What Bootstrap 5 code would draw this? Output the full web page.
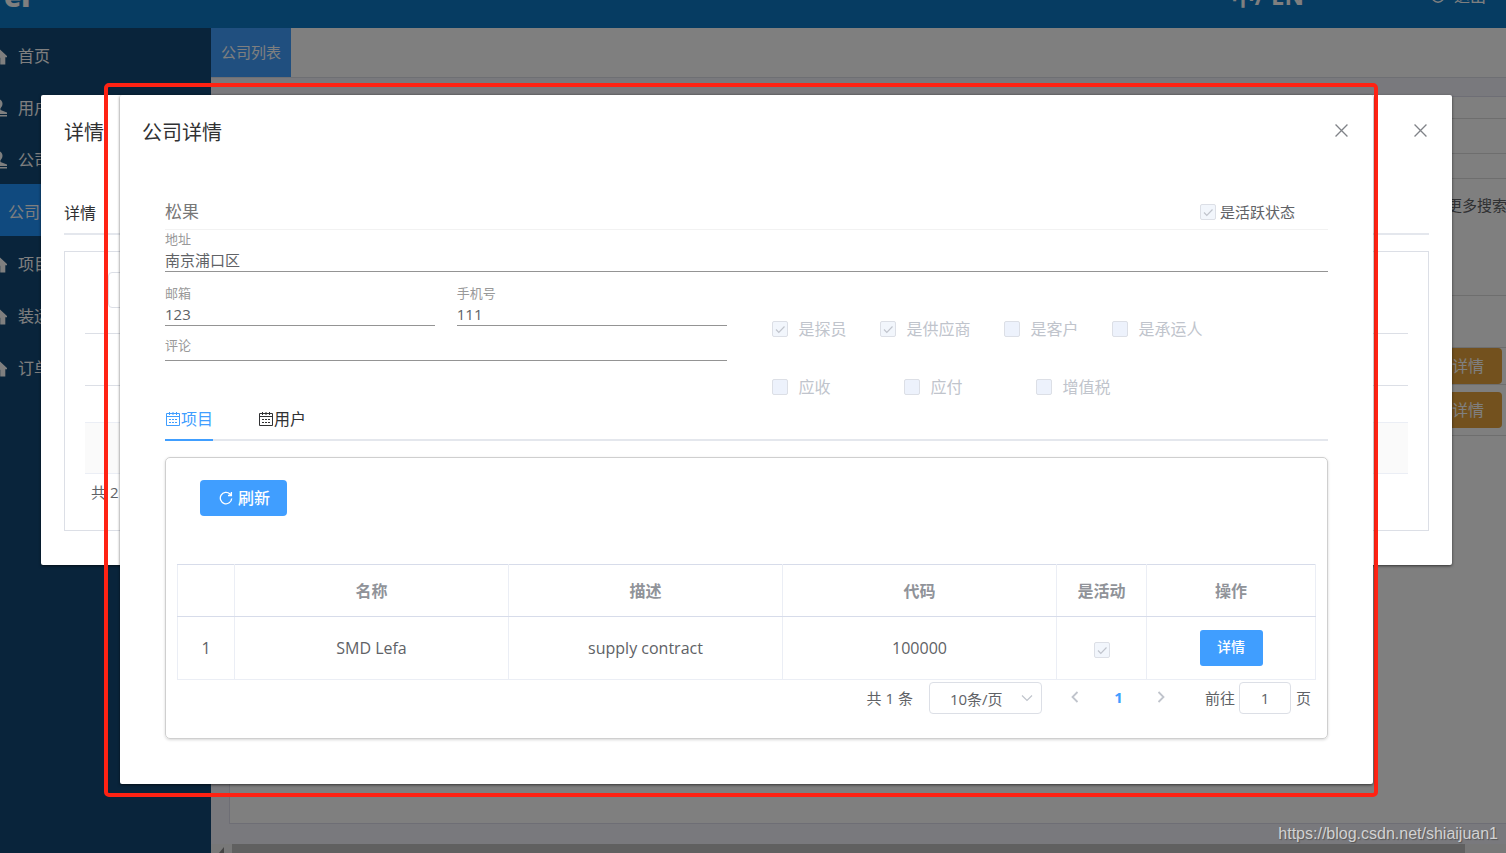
<!DOCTYPE html>
<html lang="zh-CN">
<head>
<meta charset="utf-8">
<meta name="viewport" content="width=device-width, initial-scale=1">
<title>公司详情</title>
<link href="https://cdn.jsdelivr.net/npm/bootstrap@5.3.0/dist/css/bootstrap.min.css" rel="stylesheet">
<style>
  body { font-family: "Open Sans", "Noto Sans CJK SC", sans-serif; font-size: 16px; color: #606266; }
  a { text-decoration: none; }
  .icon { display: block; flex: none; }

  /* page behind the dialogs */
  .topbar { height: 28px; background: #0c78c4; color: #fff; padding-bottom: 20px; line-height: 24px; }
  .topbar .brand-name { font-size: 28px; font-weight: 800; }
  .topbar .lang { font-size: 24px; font-weight: 700; }
  .topbar .logout { font-size: 16px; color: #fff; margin: 0 20px 0 126px; }
  .side { width: 211px; background: #124876; }
  .side a { height: 52px; color: #fff; padding: 3px 0 0 18px; position: relative; }
  .side a.on { background: #2094fe; padding-left: 8px; }
  .side .icon { position: absolute; left: -11px; }
  .workspace { background: #f2f2fa; }
  .page-tabs { height: 50px; background: #fff; border-bottom: 1px solid #dcdfe6; }
  .page-tabs a { width: 80px; background: #409eff; color: #fff; font-size: 15px; }
  .sheet { margin: 18px 0 20px 18px; background: #fff; border: 1px solid #dcdcea; border-right: 0; }
  .line { border-bottom: 1px solid #dcdcdc; }
  .more { font-size: 15px; color: #606266; width: 59px; white-space: nowrap; padding-top: 15px; }
  .btn-amber { width: 68px; height: 36px; background: #e6a23c; color: #fff; padding: 0; border-radius: 4px; margin-right: 4px; }
  .hscroll { height: 9px; background: #f1f1f1; padding: 0 41px 0 8px; }
  .hscroll .thumb { background: #c1c1c1; margin-left: 8px; }
  .shade { background: rgba(0, 0, 0, .5); }

  /* dialogs */
  .dlg { background: #fff; border-radius: 2px; box-shadow: 0 1px 3px rgba(0, 0, 0, .6); }
  .dlg-back { inset: 95px 54px auto 41px; padding: 26px 23px 34px; }
  .dlg-frame { inset: 83px 128px auto 104px; padding: 8px 1px 9px 12px; border: 4px solid #ff2213; border-radius: 5px; }
  .dlg-front { padding: 26px 45px 45px; }
  .dlg-head { height: 24px; }
  .dlg-front .dlg-head { margin: 0 -22px 50px -23px; }
  .dlg-head h2 { font-size: 20px; line-height: 24px; color: #303133; font-weight: 400; margin: 0; }
  .dlg-close { border: 0; background: none; padding: 0; height: 18px; color: #808388; margin-right: 2px; }

  .tab-line { border-bottom: 2px solid #e4e7ed; }
  .tab-line a { display: flex; align-items: center; color: #303133; }
  .tab-line a.on { color: #409eff; border-bottom: 2px solid #409eff; margin-bottom: -2px; }
  .tab-back { margin-top: 48px; height: 42px; }
  .tab-front { height: 42px; gap: 45px; }
  .panel-back { margin-top: 16px; padding: 20px 20px 26px; border: 1px solid #dcdfe6; }
  .panel-back .search { height: 36px; margin: 0 23px 25px; border-color: #dcdfe6; border-radius: 4px; }
  .grid-back { border-top: 1px solid #dcdfe6; }
  .grid-back div { border-bottom: 1px solid #dcdfe6; height: 52px; }
  .grid-back div.gap-row { height: 37px; border-color: #ebeef5; }
  .grid-back div.stripe { height: 51px; background: #fafafa; border-color: #ebeef5; }
  .count { font-size: 15px; line-height: 24px; padding: 6px 0 0 6px; }

  .name-row { height: 35px; border-bottom: 1px solid #f2f2f2; }
  .name-row input[type=text] { border: 0; padding: 0; font-size: 17px; color: #777; background: none; }
  .name-row label { font-size: 15px; margin-right: 33px; gap: 4px; color: #606266; }
  .field label { display: block; font-size: 13px; line-height: 18px; color: #999; }
  .field input { display: block; width: 100%; height: 24px; padding: 0; border: 0; border-bottom: 1px solid #949494; border-radius: 0; font-size: 15px; color: #606266; background: none; }
  .field.blank input { height: 7px; }
  .pair { margin: 12px 0 10px; gap: 22px; }
  .left-part { padding-right: 20px; }
  .flags { padding: 45px 0 0 25px; }
  .flags label { height: 24px; gap: 11px; color: #c0c4cc; }
  .flag-row { gap: 33px; margin-bottom: 34px; }
  .flag-row.wide { gap: 73px; margin-bottom: 0; }
  .tick { appearance: none; flex: none; width: 16px; height: 16px; margin: 0; border: 1px solid #dcdfe6; border-radius: 2px; background: #edf2fc; }
  .tick:checked { background: #f2f6fc url("data:image/svg+xml,%3Csvg xmlns='http://www.w3.org/2000/svg' viewBox='0 0 14 14'%3E%3Cpath d='M3 7.5l2.8 2.8L11.5 4.5' fill='none' stroke='%23c0c4cc' stroke-width='1.2'/%3E%3C/svg%3E") center/14px no-repeat; }

  .list-panel { margin-top: 16px; padding: 22px 11px 24px; border: 1px solid #cfcfcf; border-radius: 5px; box-shadow: 0 1px 3px rgba(0, 0, 0, .16); }
  .btn-blue { height: 36px; background: #409eff; color: #fff; border-radius: 4px; padding: 0 16px 0 18px; gap: 5px; font-weight: 500; }
  .btn-blue:hover { background: #66b1ff; color: #fff; }
  .btn-refresh { margin: 0 23px 48px; }
  .btn-detail { width: 63px; padding: 0 0 4px; font-size: 14px; border-radius: 3px; }
  .records { width: 100%; table-layout: fixed; border-collapse: collapse; text-align: center; border: 1px solid #ebeef5; border-top-color: #d7dcea; }
  .records th { height: 52px; color: #909399; font-weight: 700; border-right: 1px solid #ebeef5; border-bottom: 1px solid #d7dcea; }
  .records td { height: 63px; border-right: 1px solid #ebeef5; }
  .records .c-no { width: 57px; } .records .c-act { width: 90px; } .records .c-op { width: 169px; }
  .pager { font-size: 15px; margin: 2px 5px 0 0; line-height: 32px; }
  .pager select { width: 113px; height: 32px; margin: 0 16px; padding: 0 19px 3px 20px; border: 1px solid #dcdfe6; border-radius: 4px; color: #606266; font-size: 15px; appearance: none;
    background: url("data:image/svg+xml,%3Csvg xmlns='http://www.w3.org/2000/svg' viewBox='0 0 12 12'%3E%3Cpath d='M1 3.5l5 5 5-5' fill='none' stroke='%23c0c4cc' stroke-width='1.2'/%3E%3C/svg%3E") right 8px center/12px no-repeat; }
  .pager button { width: 35px; height: 30px; padding: 0; border: 0; background: none; color: #c0c4cc; display: flex; align-items: center; justify-content: center; }
  .pager button.on { color: #409eff; font-weight: 700; }
  .pager .pages { gap: 8px; margin-right: 26px; }
  .pager input { width: 52px; height: 32px; margin: 0 5px 0 4px; border: 1px solid #dcdfe6; border-radius: 4px; text-align: center; color: #606266; }
  .source { right: 8px; bottom: 8px; font: 16px/22px "Liberation Sans", sans-serif; color: #d2d2d2; text-shadow: 1px 1px 1px #555; }
</style>
</head>
<body class="vh-100 overflow-hidden position-relative">
<svg class="d-none" xmlns="http://www.w3.org/2000/svg">
  <symbol id="i-house" viewBox="0 0 16 16"><path fill="currentColor" d="M8 .5L0 8v1h1.500v6.500h4.500v-6h4v6h4.500V9H16V8z"/></symbol>
  <symbol id="i-user" viewBox="0 0 16 16"><path fill="currentColor" d="M8 0a4 4 0 0 1 4 4.200c0 1.800-.8 3-1.800 4v1.600L16 12v1.300H0V12l5.800-2.200V8.200C4.800 7.200 4 6 4 4.200A4 4 0 0 1 8 0zM0 14.200h16v1.300H0z"/></symbol>
  <symbol id="i-cal" viewBox="0 0 16 16"><path fill="none" stroke="currentColor" d="M1.500 2.500h13v12h-13zM1.500 5.500h13M4.500 1v3M8 1v3M11.500 1v3M4 8.500h2M7 8.500h2M10 8.500h2M4 11.500h2M7 11.500h2M10 11.500h2"/></symbol>
  <symbol id="i-x" viewBox="0 0 12 12"><path fill="none" stroke="currentColor" stroke-width="1.200" d="M.5.5l11 11M11.500.5l-11 11"/></symbol>
  <symbol id="i-refresh" viewBox="0 0 14 14"><path fill="none" stroke="currentColor" stroke-width="1.300" d="M12.700 7.500A5.700 5.700 0 1 1 11 3l1 1M12.400 1v3.500H9"/></symbol>
  <symbol id="i-prev" viewBox="0 0 12 12"><path fill="none" stroke="currentColor" stroke-width="1.800" d="M8.500 1l-5 5 5 5"/></symbol>
  <symbol id="i-next" viewBox="0 0 12 12"><path fill="none" stroke="currentColor" stroke-width="1.800" d="M3.500 1l5 5-5 5"/></symbol>
  <symbol id="i-power" viewBox="0 0 16 16"><path fill="none" stroke="currentColor" stroke-width="1.500" d="M5 3a6 6 0 1 0 6 0M8 1v7"/></symbol>
</svg>

<div class="d-flex flex-column h-100">
  <header class="topbar d-flex align-items-end">
    <span class="brand-name ps-1">er</span>
    <span class="lang ms-auto">中/ EN</span>
    <a class="logout d-flex align-items-center gap-2" href="#"><svg class="icon" width="16" height="16"><use href="#i-power"/></svg>退出</a>
  </header>
  <div class="d-flex flex-fill">
    <nav class="side flex-shrink-0 overflow-hidden">
      <a class="d-flex align-items-center" href="#"><svg class="icon" width="18" height="18"><use href="#i-house"/></svg>首页</a>
      <a class="d-flex align-items-center" href="#"><svg class="icon" width="18" height="18"><use href="#i-user"/></svg>用户</a>
      <a class="d-flex align-items-center" href="#"><svg class="icon" width="18" height="18"><use href="#i-user"/></svg>公司</a>
      <a class="d-flex align-items-center on" href="#">公司列表</a>
      <a class="d-flex align-items-center" href="#"><svg class="icon" width="18" height="18"><use href="#i-house"/></svg>项目</a>
      <a class="d-flex align-items-center" href="#"><svg class="icon" width="18" height="18"><use href="#i-house"/></svg>装运</a>
      <a class="d-flex align-items-center" href="#"><svg class="icon" width="18" height="18"><use href="#i-house"/></svg>订单</a>
    </nav>
    <main class="workspace flex-fill d-flex flex-column overflow-hidden">
      <div class="page-tabs d-flex"><a class="d-flex align-items-center justify-content-center" href="#">公司列表</a></div>
      <section class="sheet flex-fill d-flex flex-column align-items-stretch">
        <div class="line" style="height:22px"></div>
        <div class="line" style="height:35px"></div>
        <div class="line" style="height:25px"></div>
        <div class="line d-flex justify-content-end" style="height:117px"><span class="more">更多搜索条件</span></div>
        <div class="line" style="height:52px"></div>
        <div class="line d-flex justify-content-end" style="height:37px"><button class="btn btn-amber" type="button">详情</button></div>
        <div class="line d-flex justify-content-end align-items-center" style="height:51px"><button class="btn btn-amber" type="button">详情</button></div>
      </section>
      <div class="hscroll d-flex">
        <svg class="icon" width="5" height="9" viewBox="0 0 5 9"><path fill="#888" d="M5 3v6H0z"/></svg>
        <div class="thumb flex-fill"></div>
      </div>
    </main>
  </div>
</div>
<div class="shade position-absolute top-0 start-0 w-100 h-100"></div>

<section class="dlg dlg-back position-absolute" role="dialog" aria-label="详情">
  <div class="dlg-head d-flex justify-content-between">
    <h2>详情</h2>
    <button class="dlg-close d-flex align-items-center" type="button" aria-label="关闭"><svg class="icon" width="13" height="13"><use href="#i-x"/></svg></button>
  </div>
  <nav class="tab-line tab-back d-flex"><a href="#">详情</a></nav>
  <div class="panel-back">
    <input class="form-control search w-25" type="text" aria-label="搜索">
    <div class="grid-back"><div></div><div class="gap-row"></div><div class="stripe"></div></div>
    <div class="count">共 2 条</div>
  </div>
</section>

<div class="dlg-frame position-absolute">
  <section class="dlg dlg-front" role="dialog" aria-label="公司详情">
    <div class="dlg-head d-flex justify-content-between">
      <h2>公司详情</h2>
      <button class="dlg-close d-flex align-items-center" type="button" aria-label="关闭"><svg class="icon" width="13" height="13"><use href="#i-x"/></svg></button>
    </div>
    <form>
      <div class="name-row d-flex align-items-center justify-content-between">
        <input type="text" value="松果" aria-label="名称" readonly>
        <label class="d-flex align-items-center"><input class="tick" type="checkbox" checked disabled>是活跃状态</label>
      </div>
      <div class="field"><label for="addr">地址</label><input id="addr" type="text" value="南京浦口区" readonly></div>
      <div class="row g-0">
        <div class="col-6 left-part">
          <div class="pair d-flex">
            <div class="field flex-fill"><label for="mail">邮箱</label><input id="mail" type="text" value="123" readonly></div>
            <div class="field flex-fill"><label for="tel">手机号</label><input id="tel" type="text" value="111" readonly></div>
          </div>
          <div class="field blank"><label for="note">评论</label><input id="note" type="text" readonly></div>
        </div>
        <div class="col-6 flags">
          <div class="flag-row d-flex">
            <label class="d-flex align-items-center"><input class="tick" type="checkbox" checked disabled>是探员</label>
            <label class="d-flex align-items-center"><input class="tick" type="checkbox" checked disabled>是供应商</label>
            <label class="d-flex align-items-center"><input class="tick" type="checkbox" disabled>是客户</label>
            <label class="d-flex align-items-center"><input class="tick" type="checkbox" disabled>是承运人</label>
          </div>
          <div class="flag-row wide d-flex">
            <label class="d-flex align-items-center"><input class="tick" type="checkbox" disabled>应收</label>
            <label class="d-flex align-items-center"><input class="tick" type="checkbox" disabled>应付</label>
            <label class="d-flex align-items-center"><input class="tick" type="checkbox" disabled>增值税</label>
          </div>
        </div>
      </div>
    </form>
    <nav class="tab-line tab-front d-flex">
      <a class="on" href="#"><svg class="icon" width="16" height="16"><use href="#i-cal"/></svg>项目</a>
      <a href="#"><svg class="icon" width="16" height="16"><use href="#i-cal"/></svg>用户</a>
    </nav>
    <div class="list-panel">
      <button class="btn btn-blue btn-refresh d-flex align-items-center" type="button"><svg class="icon" width="14" height="14"><use href="#i-refresh"/></svg>刷新</button>
      <table class="records">
        <thead><tr><th class="c-no"></th><th>名称</th><th>描述</th><th>代码</th><th class="c-act">是活动</th><th class="c-op">操作</th></tr></thead>
        <tbody><tr>
          <td>1</td><td>SMD Lefa</td><td>supply contract</td><td>100000</td>
          <td><input class="tick align-middle" type="checkbox" aria-label="是活动" checked disabled></td>
          <td><button class="btn btn-blue btn-detail" type="button">详情</button></td>
        </tr></tbody>
      </table>
      <div class="pager d-flex justify-content-end">
        <span>共 1 条</span>
        <select aria-label="每页条数"><option>10条/页</option></select>
        <div class="pages d-flex">
          <button type="button" aria-label="上一页"><svg class="icon" width="12" height="12"><use href="#i-prev"/></svg></button>
          <button class="on" type="button">1</button>
          <button type="button" aria-label="下一页"><svg class="icon" width="12" height="12"><use href="#i-next"/></svg></button>
        </div>
        <label class="d-flex">前往<input type="text" value="1">页</label>
      </div>
    </div>
  </section>
</div>
<a class="source position-absolute" href="https://blog.csdn.net/shiaijuan1">https://blog.csdn.net/shiaijuan1</a>
<script src="https://cdn.jsdelivr.net/npm/bootstrap@5.3.0/dist/js/bootstrap.bundle.min.js"></script>
</body>
</html>
